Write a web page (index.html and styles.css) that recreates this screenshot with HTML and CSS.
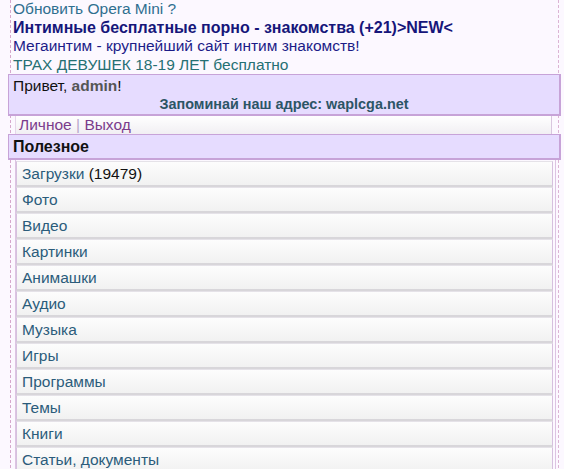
FILE: index.html
```html
<!DOCTYPE html>
<html>
<head>
<meta charset="utf-8">
<link rel="stylesheet" href="styles.css">
</head>
<body>
<div class="page">
  <div class="ads">
    <a class="ad ad-opera" href="#">Обновить Opera Mini ?</a>
    <a class="ad ad-bold" href="#">Интимные бесплатные порно - знакомства (+21)&gt;NEW&lt;</a>
    <a class="ad ad-navy" href="#">Мегаинтим - крупнейший сайт интим знакомств!</a>
    <a class="ad ad-teal" href="#">ТРАХ ДЕВУШЕК 18-19 ЛЕТ бесплатно</a>
  </div>
  <div class="head">
    <div class="hello">Привет, <b class="user">admin</b>!</div>
    <div class="remember">Запоминай наш адрес: waplcga.net</div>
  </div>
  <div class="userbar"><a href="#" class="ulink">Личное</a> <span class="sep">|</span> <a href="#" class="ulink">Выход</a></div>
  <div class="head title">Полезное</div>
  <div class="menu">
    <div class="item"><a href="#">Загрузки</a> <span class="count">(19479)</span></div>
    <div class="item"><a href="#">Фото</a></div>
    <div class="item"><a href="#">Видео</a></div>
    <div class="item"><a href="#">Картинки</a></div>
    <div class="item"><a href="#">Анимашки</a></div>
    <div class="item"><a href="#">Аудио</a></div>
    <div class="item"><a href="#">Музыка</a></div>
    <div class="item"><a href="#">Игры</a></div>
    <div class="item"><a href="#">Программы</a></div>
    <div class="item"><a href="#">Темы</a></div>
    <div class="item"><a href="#">Книги</a></div>
    <div class="item"><a href="#">Статьи, документы</a></div>
  </div>
</div>
</body>
</html>
```

FILE: styles.css
```css
html, body {
  margin: 0;
  padding: 0;
  background: #fcf8ff;
  font-family: "Liberation Sans", Arial, sans-serif;
  font-size: 15px;
  overflow: hidden;
}
a { text-decoration: none; }
.page {
  margin: 0 5px 0 10px;
  border-left: 1px dashed #d6a8cc;
  border-right: 1px dashed #dcb4d4;
  min-height: 469px;
}
.ads { padding-left: 2px; }
.ad {
  display: block;
  line-height: 18.5px;
  font-size: 15.5px;
}
.ad-opera { color: #2f6f8f; }
.ad-bold { color: #16167a; font-weight: bold; font-size: 16px; }
.ad-navy { color: #1c1c88; }
.ad-teal { color: #267073; }
.head {
  margin: 0 -3px;
  background: #e6dcff;
  border: 1px solid #c7a3d8;
  border-right-width: 2px;
  border-bottom-width: 2px;
  padding: 2px 4px 1px 4px;
  color: #111;
}
.hello { line-height: 18px; font-size: 15.5px; }
.user { color: #555; }
.remember {
  text-align: center;
  font-weight: bold;
  font-size: 14.4px;
  color: #2c5566;
  line-height: 18px;
}
.userbar {
  margin: 0 6px 0 4px;
  padding: 0 3px;
  height: 18px;
  line-height: 18px;
  font-size: 15.5px;
  background: linear-gradient(#ffffff, #f1eff3);
  border-left: 1px solid #e6d6ea;
  border-right: 1px solid #d9c6df;
}
.ulink { color: #7b3c8c; }
.sep { color: #b9a6cc; }
.title {
  font-weight: bold;
  font-size: 16px;
  line-height: 19px;
  padding-top: 2px;
  padding-bottom: 2px;
}
.menu {
  margin: 0 2px 0 4px;
  border-left: 1px solid #dcc4e2;
  border-right: 1px solid #dcc4e2;
  padding: 1px 2px 0 0;
}
.item {
  height: 23px;
  line-height: 24px;
  padding-left: 5px;
  background: linear-gradient(#fdfdfd, #f1f1f1);
  border: 1px solid #e5e2e8;
  border-left-color: #d6c0de;
  border-right-color: #d6c0de;
  border-bottom: 2px solid #d8d6da;
  font-size: 15.5px;
}
.item a { color: #2b5c7b; }
.count { color: #111; }
```
